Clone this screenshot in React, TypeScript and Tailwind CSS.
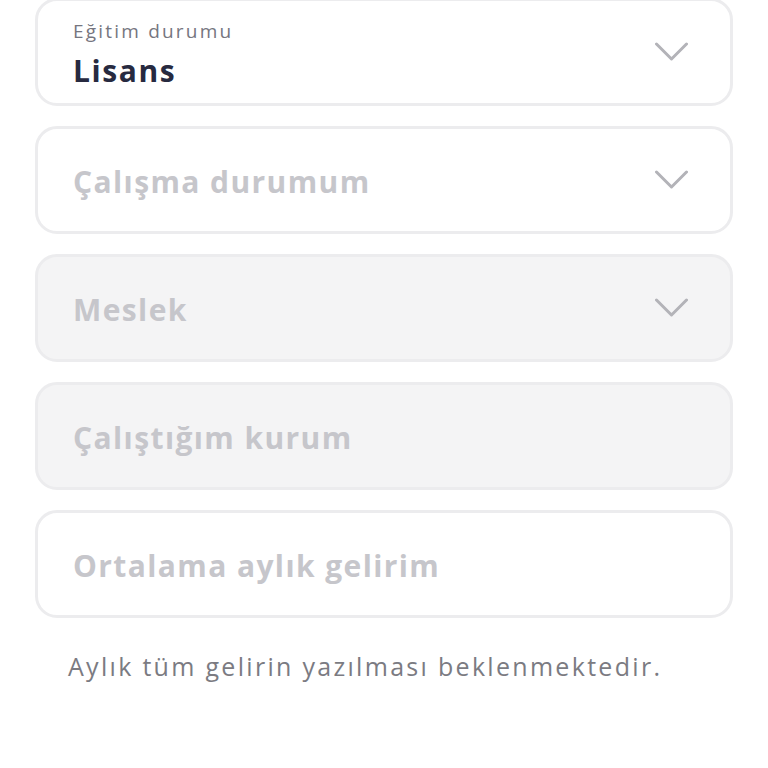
type Field = {
    label?: string;
    value?: string;
    placeholder: string;
    select?: boolean;
    disabled?: boolean;
};

const fields: Field[] = [
    { label: 'Eğitim durumu', value: 'Lisans', placeholder: 'Eğitim durumu', select: true },
    { placeholder: 'Çalışma durumum', select: true },
    { placeholder: 'Meslek', select: true, disabled: true },
    { placeholder: 'Çalıştığım kurum', disabled: true },
    { placeholder: 'Ortalama aylık gelirim' },
];

function Chevron() {
    return (
        <svg width="33" height="22" viewBox="0 0 33 22" fill="none" className="shrink-0">
            <polyline
                points="1.5,3 16.5,18 31.5,3"
                stroke="#b3b3b8"
                strokeWidth="3"
                strokeLinecap="round"
                strokeLinejoin="round"
            />
        </svg>
    );
}

function FormField({ field }: { field: Field }) {
    return (
        <div
            className={`flex h-[108px] items-center rounded-[22px] border-[3px] border-[#ececee] pl-[35px] pr-[42px] ${
                field.disabled ? 'bg-[#f4f4f5]' : 'bg-white'
            }`}
        >
            <div className="flex-1 pt-[4px]">
                {field.value ? (
                    <div className="flex flex-col">
                        <span className="text-[19px] leading-[24px] tracking-[2.2px] text-[#76767f]">{field.label}</span>
                        <span className="mt-[10px] text-[30px] leading-[36px] font-bold tracking-[1.6px] text-[#272a40]">{field.value}</span>
                    </div>
                ) : (
                    <span className="text-[30px] leading-[36px] font-bold tracking-[1.4px] text-[#c6c6cb]">{field.placeholder}</span>
                )}
            </div>
            {field.select && <Chevron />}
        </div>
    );
}

export default function App() {
    return (
        <div className="min-h-[768px] bg-white font-['Open_Sans',sans-serif]">
            <div className="-mt-[2px] flex flex-col gap-[20px] px-[35px]">
                {fields.map((f, i) => (
                    <FormField key={i} field={f} />
                ))}
            </div>
            <p className="mt-[33px] pl-[68px] text-[25px] leading-[30px] tracking-[2.3px] text-[#7b7b82]">
                Aylık tüm gelirin yazılması beklenmektedir.
            </p>
        </div>
    );
}
